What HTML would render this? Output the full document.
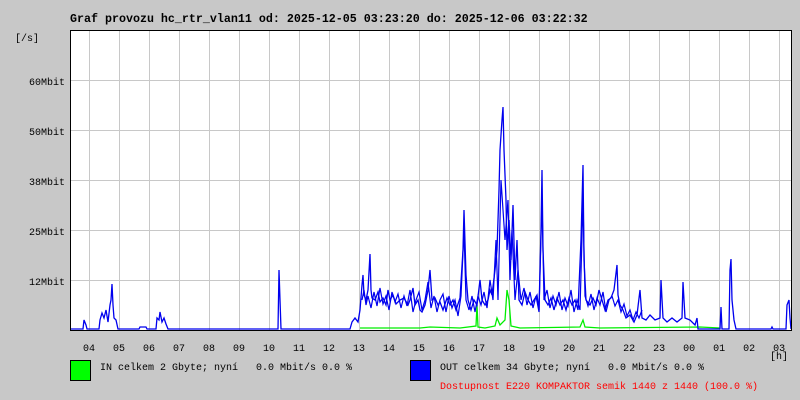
<!DOCTYPE html>
<html><head><meta charset="utf-8"><style>
body{margin:0;width:800px;height:400px;background:#c8c8c8;overflow:hidden;position:relative;font-family:"Liberation Mono",monospace;}
.t{position:absolute;white-space:pre;font-size:10px;color:#000;line-height:10px;}
</style></head><body>
<div class="t" style="left:70px;top:14px;font-size:11.67px;font-weight:bold;">Graf provozu hc_rtr_vlan11 od: 2025-12-05 03:23:20 do: 2025-12-06 03:22:32</div>
<div class="t" style="left:15px;top:35px;">[/s]</div>
<div class="t" style="left:20px;width:45px;text-align:right;top:79px;">60Mbit</div>
<div class="t" style="left:20px;width:45px;text-align:right;top:129px;">50Mbit</div>
<div class="t" style="left:20px;width:45px;text-align:right;top:179px;">38Mbit</div>
<div class="t" style="left:20px;width:45px;text-align:right;top:229px;">25Mbit</div>
<div class="t" style="left:20px;width:45px;text-align:right;top:279px;">12Mbit</div>
<svg width="800" height="400" style="position:absolute;left:0;top:0">
<rect x="70" y="30" width="721" height="300" fill="#fff"/>
<g stroke="#c8c8c8" stroke-width="1">
<path d="M89.5 30V330M119.5 30V330M149.5 30V330M179.5 30V330M209.5 30V330M239.5 30V330M269.5 30V330M299.5 30V330M329.5 30V330M359.5 30V330M389.5 30V330M419.5 30V330M449.5 30V330M479.5 30V330M509.5 30V330M539.5 30V330M569.5 30V330M599.5 30V330M629.5 30V330M659.5 30V330M689.5 30V330M719.5 30V330M749.5 30V330M779.5 30V330"/>
<path d="M70 80.5H791M70 130.5H791M70 180.5H791M70 230.5H791M70 280.5H791"/>
</g>
<path fill="none" stroke="#00ee00" stroke-width="1.3" d="M360 328L420 328L430 327L460 328L476 326L477 305L478 327L485 328L495 326L497 318L500 325L505 320L507 290L509 300L511 326L520 328L580 327L583 320L585 327L600 328L700 327L720 328"/>
<path fill="none" stroke="#0000ee" stroke-width="1.2" d="M362 300L364 290L366 305L368 296L371 308L374 292L377 306L380 288L383 304L386 296L389 310L392 292L395 302L398 294L401 308L404 296L407 306L410 290L413 312L416 300L419 292L422 310L425 300L428 282L431 308L434 296L437 312L440 300L443 294L446 312L449 296L452 308L455 300L458 316L461 296L464 230L466 300L469 310L472 296L475 312L478 296L481 305L484 292L487 308L490 280L493 300L496 240L498 300L501 180L505 240L508 200L510 280L512 230L515 300L518 270L521 300L524 288L527 305L530 292L533 308L536 296L539 312L542 200L544 300L547 290L550 308L553 296L556 305L559 292L562 310L565 298L568 306L571 290L574 312L577 300L580 310L583 200L585 296L588 306L591 294L594 310L597 298L600 305L603 292L606 312L609 300L612 296L615 306L618 300L621 312L624 304L627 316L630 310L633 320L636 312L639 318L642 310"/>
<path fill="none" stroke="#0000ee" stroke-width="1.3" d="M70 329L83 329L84 320L86 325L87 329L99 329L100 320L102 313L104 318L106 310L108 322L110 305L111 300L112 284L113 305L114 318L116 320L118 329L139 329L140 327L146 327L147 329L156 329L157 318L159 320L160 312L162 322L164 318L166 324L168 329L278 329L279 270L280 300L281 329L350 329L352 322L355 318L358 322L360 310L362 285L363 275L364 295L366 300L368 290L370 254L371 290L372 298L375 300L378 292L380 302L383 298L386 305L388 290L390 300L393 295L396 304L400 300L404 298L408 305L410 300L413 288L415 305L418 300L420 310L422 312L425 305L428 290L430 270L432 300L435 298L438 305L440 302L443 310L447 298L450 305L453 300L456 310L460 298L463 250L464 210L466 275L468 300L471 310L474 300L477 305L480 280L482 300L485 305L488 300L490 290L492 295L495 270L497 250L499 190L500 150L502 120L503 107L504 150L506 200L507 250L509 220L511 260L513 205L515 280L517 240L519 300L522 305L525 292L528 300L531 305L534 300L537 295L539 310L541 230L542 170L543 250L545 300L548 305L551 298L554 310L557 298L560 305L563 300L566 310L569 298L572 305L575 300L578 310L581 240L583 165L584 260L586 300L590 305L593 298L596 305L599 290L602 300L605 310L608 300L611 298L614 290L617 265L618 295L620 305L623 310L626 318L630 315L634 322L637 315L640 290L642 318L646 320L650 315L655 320L660 318L661 280L663 318L667 322L672 318L677 322L682 318L683 282L685 318L690 320L695 325L697 318L698 329L720 329L721 307L722 329L729 329L730 270L731 259L732 300L734 320L736 329L771 329L772 327L773 329L786 329L787 305L789 300L790 318L791 329"/>
<rect x="70.5" y="30.5" width="721" height="300" fill="none" stroke="#000" stroke-width="1"/>
<rect x="70.5" y="360.5" width="20" height="20" fill="#00ff00" stroke="#000"/>
<rect x="410.5" y="360.5" width="20" height="20" fill="#0000ff" stroke="#000"/>
</svg>
<div class="t" style="left:83px;top:345px;">04   05   06   07   08   09   10   11   12   13   14   15   16   17   18   19   20   21   22   23   00   01   02   03</div>
<div class="t" style="left:770px;top:353px;">[h]</div>
<div class="t" style="left:100px;top:364px;">IN celkem 2 Gbyte; nyní   0.0 Mbit/s 0.0 %</div>
<div class="t" style="left:440px;top:364px;">OUT celkem 34 Gbyte; nyní   0.0 Mbit/s 0.0 %</div>
<div class="t" style="left:440px;top:383px;color:#ff0000;">Dostupnost E220 KOMPAKTOR semik 1440 z 1440 (100.0 %)</div>
</body></html>
